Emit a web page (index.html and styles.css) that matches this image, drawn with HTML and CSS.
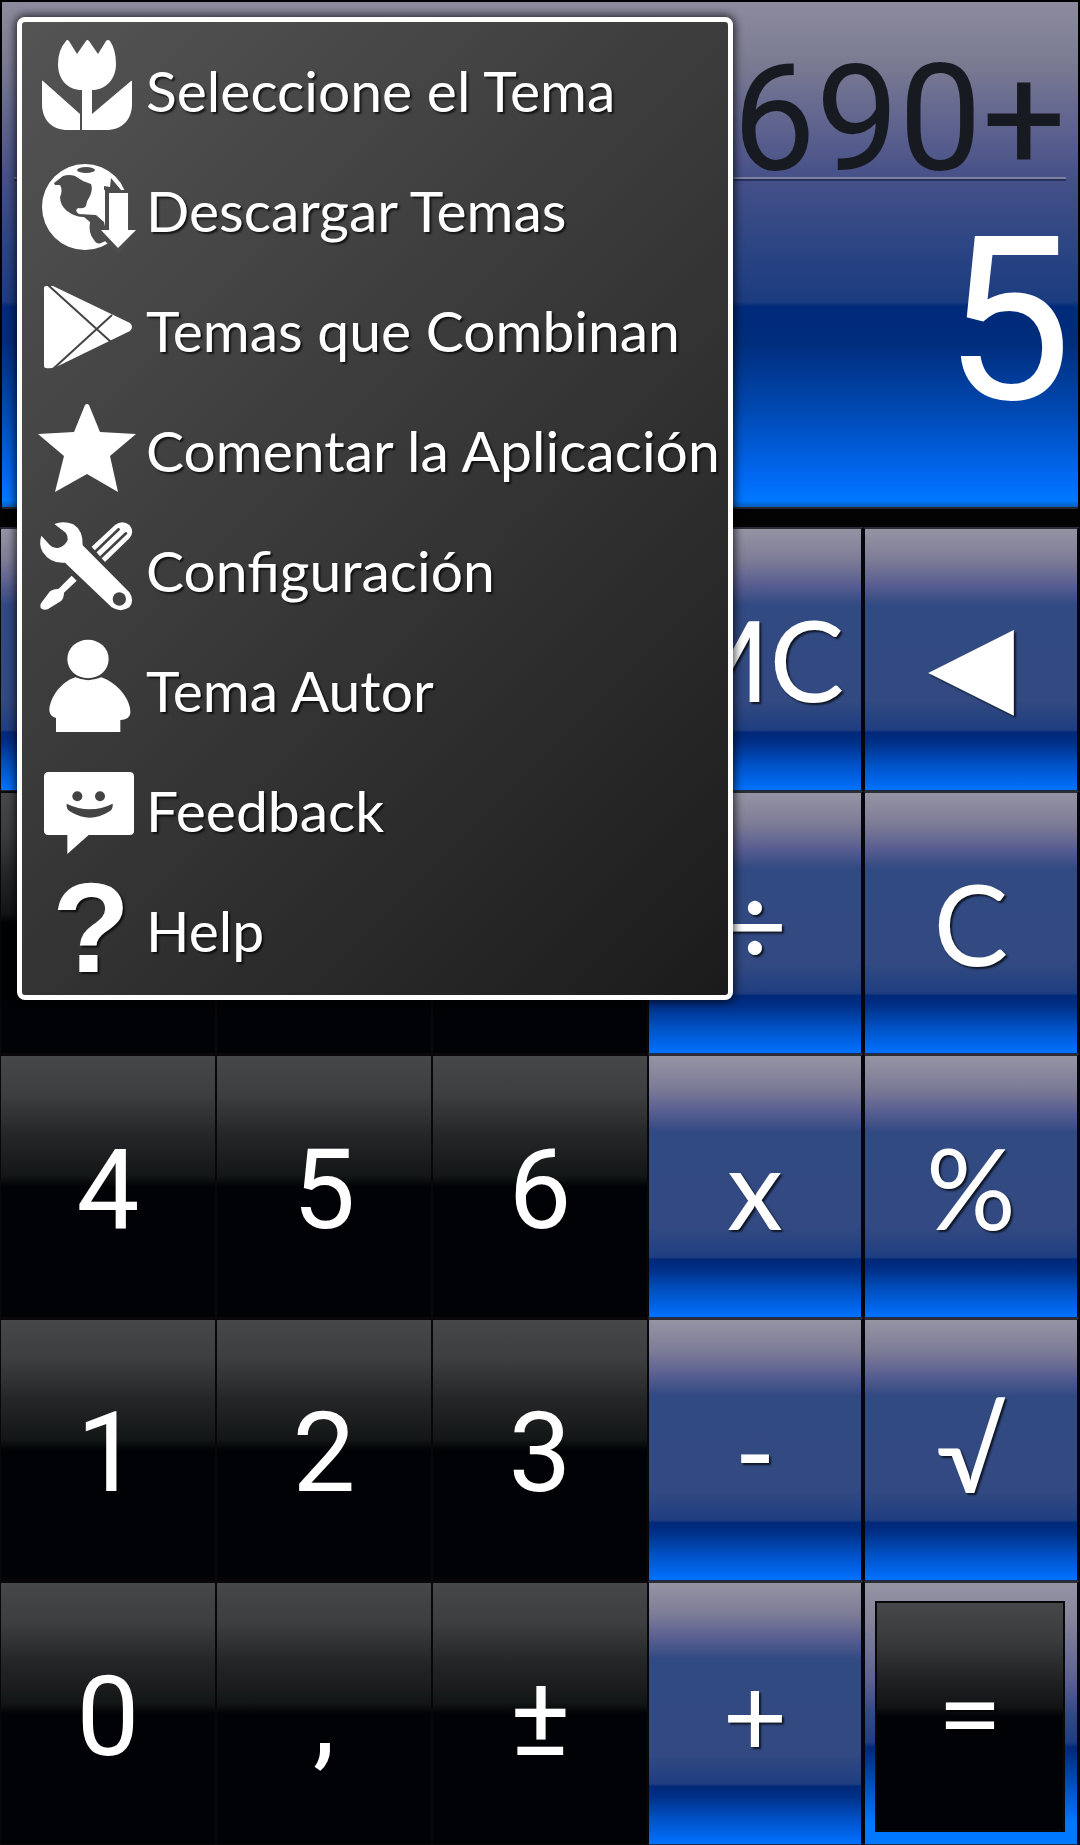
FILE: index.html
```html
<!DOCTYPE html>
<html lang="es">
<head>
  <meta charset="UTF-8">
  <meta name="viewport" content="width=device-width, initial-scale=1.0">
  <title>Calculadora</title>
  <link rel="stylesheet" href="styles.css">
</head>
<body>
  <main class="calculator">
    <section class="display">
      <output class="expression">4690+</output>
      <output class="result">5</output>
    </section>

    <section class="keypad">
      <button class="key blue" aria-label="M+"></button>
      <button class="key blue" aria-label="M-"></button>
      <button class="key blue" aria-label="MR"></button>
      <button class="key blue">MC</button>
      <button class="key blue">◀</button>

      <button class="key" aria-label="7"></button>
      <button class="key" aria-label="8"></button>
      <button class="key" aria-label="9"></button>
      <button class="key blue">÷</button>
      <button class="key blue">C</button>

      <button class="key">4</button>
      <button class="key">5</button>
      <button class="key">6</button>
      <button class="key blue">x</button>
      <button class="key blue">%</button>

      <button class="key">1</button>
      <button class="key">2</button>
      <button class="key">3</button>
      <button class="key blue">-</button>
      <button class="key blue">√</button>

      <button class="key">0</button>
      <button class="key">,</button>
      <button class="key">±</button>
      <button class="key blue">+</button>
      <button class="key blue equals"><span>=</span></button>
    </section>
  </main>

  <nav class="menu">
    <button class="item">
      <svg class="icon" viewBox="37 40 100 100">
        <path d="M66 41Q67 39 69 41L77 54L86 41Q87 39 89 41L98 54L106 41Q108 39 110 41Q116 50 116 64C116 80 105 90 92 90L92 114L131 81Q132 80 132 82V104C132 120 122 130 106 130H82V90C68 90 58 80 58 64Q58 50 66 41Z"/>
        <path d="M42 81Q42 80 43 81L80 114V130H68C52 130 42 120 42 104Z"/>
      </svg>
      <span>Seleccione el Tema</span>
    </button>
    <button class="item">
      <svg class="icon" viewBox="37 160 100 100">
        <circle cx="85" cy="207" r="43"/>
        <g class="cut light">
          <ellipse cx="86" cy="170" rx="9" ry="3"/>
          <path d="M54 183L63 176Q69 174 75 176L83 181L91 184Q93 189 90 196Q87 200 86 206Q84 209 78 208Q74 211 79 214L96 215L104 222L108 240L101 243Q97 245 94 240Q88 233 90 222L84 217Q75 217 67 211Q60 205 60 197Q63 190 60 185L55 185Z"/>
          <path d="M111 178L121 190H104V186L110 187Z"/>
          <path d="M105 190H129V240L118 254L105 241L96 227H105Z"/>
        </g>
        <path d="M109 193H128V230H136L118 248L101 230H109Z"/>
      </svg>
      <span>Descargar Temas</span>
    </button>
    <button class="item">
      <svg class="icon" viewBox="37 280 100 100">
        <path d="M44 288Q44 286 46 286H53L130 323Q134 327 130 331L56 367Q50 369 46 368Q44 368 44 366Z"/>
        <path class="line" d="M48 285L111 342M53 369L112 315"/>
      </svg>
      <span>Temas que Combinan</span>
    </button>
    <button class="item">
      <svg class="icon" viewBox="37 400 100 100">
        <path d="M85 405Q87 403 89 405L100 432L136 434L110 456L118 492L87 474L55 492L64 456L38 434L74 432Z"/>
      </svg>
      <span>Comentar la Aplicación</span>
    </button>
    <button class="item">
      <svg class="icon" viewBox="111 420 300 300">
        <path d="M275 500L345 435Q368 418 389 436Q404 456 389 474L315 546Z"/>
        <path class="line thick" d="M288 513L356 448M304 530L378 460"/>
        <path d="M215 587L230 602L192 638Q192 655 182 664L143 688Q130 692 122 684Q118 676 124 668L150 634Q160 626 176 626Z"/>
        <path d="M163 432Q190 421 220 433Q250 452 248 496L388 637Q405 662 388 682Q362 699 335 682L195 548Q152 552 128 516Q115 494 124 467L150 496Q160 506 174 504Q194 500 203 480Q205 468 197 458Z"/>
        <circle class="cut" cx="358" cy="657" r="20"/>
      </svg>
      <span>Configuración</span>
    </button>
    <button class="item">
      <svg class="icon" viewBox="111 780 300 300">
        <ellipse cx="264" cy="837" rx="62" ry="58"/>
        <path d="M226 892Q264 909 304 892C352 908 394 960 391 1000Q388 1020 361 1020V1056H168V1014Q147 1008 148 988C152 950 184 905 226 892Z"/>
      </svg>
      <span>Tema Autor</span>
    </button>
    <button class="item">
      <svg class="icon" viewBox="111 60 300 300">
        <path d="M146 96H389Q402 96 402 110V272Q402 285 389 285H266L202 342V285H146Q132 285 132 272V110Q132 96 146 96Z"/>
        <g class="cut">
          <circle cx="232" cy="169" r="15"/>
          <circle cx="300" cy="169" r="15"/>
          <path d="M200 191Q270 225 338 191Q341 207 325 216Q270 250 213 216Q197 207 200 191Z"/>
        </g>
      </svg>
      <span>Feedback</span>
    </button>
    <button class="item">
      <svg class="icon" viewBox="0 0 100 100">
        <text class="mark" x="54" y="92">?</text>
      </svg>
      <span>Help</span>
    </button>
  </nav>
</body>
</html>
```
FILE: styles.css
```css
* { box-sizing: border-box; }
body {
  margin: 0;
  background: #000;
  color: #fff;
  font-family: Lato, sans-serif;
}
button {
  margin: 0;
  padding: 0;
  border: none;
  background: none;
  color: inherit;
  font: inherit;
  cursor: pointer;
}
.calculator {
  display: grid;
  grid-template-rows: 2fr 5fr;
  min-height: 100vh;
}

/* display */
.display {
  padding: 3px 2px 0;
  border-bottom: 16px solid #030303;
  background: linear-gradient(#8d8c9f 0%, #7b7b92 12%, #62668f 23%, #465088 35%, #2c4583 48%, #1c3c80 59%, #002a7a 60%, #002d7c 67%, #0048b0 80%, #006af6 94%, #0078ff 98%, #0560c4 99%, #0560c4 100%);
  background-clip: padding-box;
  box-shadow: inset 0 0 0 2px #000, inset 0 -4px 0 #24262c;
  font-family: Roboto, sans-serif;
  text-align: right;
}
.expression {
  display: block;
  margin: 0 12px;
  padding-top: 42px;
  height: 176px;
  border-bottom: 2px solid #7b80a0;
  box-shadow: 0 2px 0 #26305c;
  color: #181a22;
  font-size: 148px;
  line-height: 150px;
}
.result {
  display: block;
  margin: 0 6px;
  font-size: 228px;
  line-height: 284px;
}

/* keys */
.keypad {
  display: grid;
  grid-template-columns: repeat(5, 1fr);
  grid-template-rows: repeat(5, 1fr);
}
.key {
  padding-top: 6px;
  border: solid #0b0708;
  border-width: 2px 1px 1px;
  background: linear-gradient(#464748 0%, #3d3e3f 15%, #252627 30%, #131617 46%, #000205 50%, #000205 100%);
  font-family: Roboto, sans-serif;
  font-size: 112px;
  line-height: 1;
}
.blue {
  padding-top: 0;
  border-color: #2c2c34 #05060c #1c2c50;
  border-right-width: 3px;
  background: linear-gradient(#9594a4 0%, #7d7c96 12%, #5a5f91 21%, #324a82 29%, #324981 66%, #1f3e80 77%, #002878 78%, #003088 82%, #0050c4 90%, #0072ff 100%);
  font-family: Lato, sans-serif;
  text-shadow: 2px 2px 2px rgba(0, 0, 0, 0.7);
}
.equals {
  display: flex;
  padding: 18px 12px 12px 10px;
  background: linear-gradient(#9594a4 0%, #85849b 14%, #5a5f91 38%, #324a82 50%, #1f3e80 61%, #002878 63%, #0050c4 78%, #0078ff 92%, #0078ff 100%);
}
.equals span {
  flex: 1;
  align-self: stretch;
  display: flex;
  justify-content: center;
  align-items: center;
  padding-bottom: 12px;
  border: 2px solid #08080a;
  background: linear-gradient(#464748 0%, #3a3b3c 16%, #202123 34%, #121314 46%, #000205 50%, #000205 100%);
}

/* menu */
.menu {
  position: absolute;
  top: 17px;
  left: 17px;
  display: flex;
  flex-direction: column;
  padding: 8px 8px 5px 15px;
  border: 5px solid #fff;
  border-radius: 8px;
  background: linear-gradient(135deg, #545454 0%, #1b1b1b 100%);
  box-shadow: 0 0 8px 2px rgba(0, 0, 0, 0.7);
}
.item {
  display: flex;
  align-items: center;
  gap: 9px;
  height: 120px;
  font-size: 57px;
  white-space: nowrap;
  text-shadow: 2px 2px 2px rgba(0, 0, 0, 0.7);
}
.icon {
  flex: none;
  width: 100px;
  height: 100px;
  overflow: visible;
  fill: #fff;
}
.cut { fill: #434343; }
.light { fill: #4d4d4d; }
.line {
  fill: none;
  stroke: #434343;
  stroke-width: 2;
}
.thick {
  stroke-width: 8;
  stroke-linecap: round;
}
.mark {
  font-family: "Liberation Sans", sans-serif;
  font-size: 128px;
  font-weight: 700;
  text-anchor: middle;
}
```
